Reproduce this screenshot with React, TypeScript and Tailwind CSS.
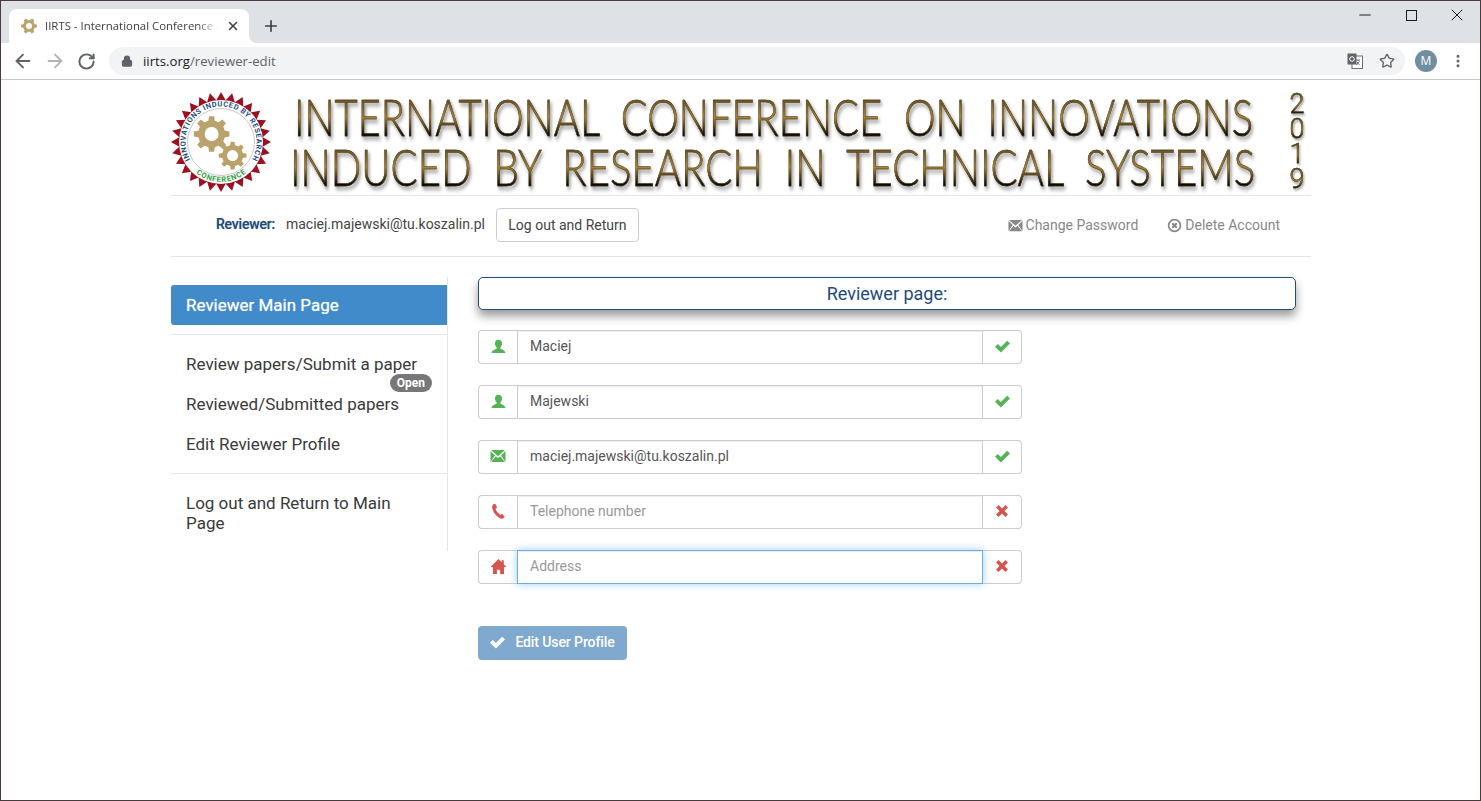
import React from "react";
import { ArrowLeft, ArrowRight, RotateCw, Plus, X, Minus, Lock, Star, MoreVertical } from "lucide-react";

const gearPath = (cx: number, cy: number, outer: number, inner: number, teeth: number) => {
  const pts: string[] = [];
  const step = (Math.PI * 2) / teeth;
  for (let i = 0; i < teeth; i++) {
    const a = i * step;
    const offsets: [number, number][] = [
      [-0.3, inner],
      [-0.18, outer],
      [0.18, outer],
      [0.3, inner],
    ];
    offsets.forEach(([o, r]) => {
      const t = a + o * step;
      pts.push(`${(cx + Math.cos(t) * r).toFixed(2)} ${(cy + Math.sin(t) * r).toFixed(2)}`);
    });
  }
  return "M" + pts.join("L") + "Z";
};

const burstPath = (cx: number, cy: number, outer: number, inner: number, points: number) => {
  const pts: string[] = [];
  for (let i = 0; i < points * 2; i++) {
    const r = i % 2 === 0 ? outer : inner;
    const t = (i * Math.PI) / points;
    pts.push(`${(cx + Math.cos(t) * r).toFixed(2)} ${(cy + Math.sin(t) * r).toFixed(2)}`);
  }
  return "M" + pts.join("L") + "Z";
};

const Gear = ({ cx, cy, r, hole }: { cx: number; cy: number; r: number; hole: number }) => (
  <g>
    <path d={gearPath(cx, cy, r, r * 0.76, 8)} fill="#b9a36b" />
    <circle cx={cx} cy={cy} r={hole} fill="#fff" />
  </g>
);

const Logo = () => (
  <svg width="100" height="100" viewBox="0 0 100 100" className="shrink-0">
    <defs>
      <path id="sealTop" d="M19.300 67.750 A 35.500 35.500 0 1 1 80.700 67.750" />
      <path id="sealBottom" d="M25 81.200 A 40 40 0 0 0 75 81.200" />
    </defs>
    <path d={burstPath(50, 50, 50, 42, 28)} fill="#9c1020" />
    <circle cx="50" cy="50" r="42" fill="#fff" />
    <circle cx="50" cy="50" r="33.500" fill="#fff" stroke="#b9b9b9" strokeWidth="0.8" />
    <text fontFamily="Roboto, sans-serif" fontSize="7.400" fontWeight="700" fill="#27507f">
      <textPath href="#sealTop" textLength="148">
        INNOVATIONS INDUCED BY RESEARCH
      </textPath>
    </text>
    <text fontFamily="Roboto, sans-serif" fontSize="7.500" fontWeight="700" fill="#2f9e44">
      <textPath href="#sealBottom" textLength="54">
        CONFERENCE
      </textPath>
    </text>
    <Gear cx={40.600} cy={42} r={18} hole={7} />
    <Gear cx={61.600} cy={63.600} r={14} hole={5.500} />
  </svg>
);

// glyphicon style icons
const UserGlyph = ({ className }: { className: string }) => (
  <svg viewBox="0 0 16 16" className={className} fill="currentColor">
    <path d="M8 .8c2.300 0 3.800 1.700 3.800 4.100 0 1.700-.8 3.200-1.800 4v1.100c0 .7 5 1.300 5.500 4.800H.5c.5-3.500 5.500-4.100 5.500-4.800V8.900C5 8.100 4.200 6.600 4.200 4.900 4.200 2.500 5.700.8 8 .8Z" />
  </svg>
);

const MailGlyph = ({ className }: { className: string }) => (
  <svg viewBox="0 0 16 16" className={className} fill="currentColor">
    <path d="M1 2h14L8 8.200ZM.5 3 5 7.500.5 14ZM15.500 3v11L11 7.500ZM5.800 8.200 8 10.100l2.200-1.900 4.700 5.800H1.100Z" />
  </svg>
);

const PhoneGlyph = ({ className }: { className: string }) => (
  <svg viewBox="0 0 16 16" className={className} fill="currentColor">
    <path d="M3.100 1.200 5 .8l1.700 3.400-1.500 1.300c.5 2 2.400 4.400 4.500 5.700l1.500-1 2.700 2.700-1.300 1.500c-.7.500-1.700.6-2.800.1C6.200 12.800 2.800 8.600 2.100 4.700 1.900 3.300 2.300 2 3.100 1.200Z" />
  </svg>
);

const HomeGlyph = ({ className }: { className: string }) => (
  <svg viewBox="0 0 16 16" className={className} fill="currentColor">
    <path d="M8 1 .5 8.500h2.300V15h3.700v-4h3v4h3.700V8.500h2.300L13 6V2h-2v2Z" />
  </svg>
);

const OkGlyph = ({ className }: { className: string }) => (
  <svg viewBox="0 0 16 16" className={className} fill="currentColor">
    <path d="M13 1.800 16 4.800 6.300 14.500 0 8.200l3-3 3.300 3.300Z" />
  </svg>
);

const RemoveGlyph = ({ className }: { className: string }) => (
  <svg viewBox="0 0 16 16" className={className} fill="currentColor">
    <path d="M4 1.200 8 5.200l4-4L14.800 4l-4 4 4 4-2.800 2.800-4-4-4 4L1.200 12l4-4-4-4Z" />
  </svg>
);

const RemoveCircle = ({ className }: { className: string }) => (
  <svg viewBox="0 0 16 16" className={className} fill="none" stroke="currentColor">
    <circle cx="8" cy="8" r="6.300" strokeWidth="1.800" />
    <path d="M5.600 5.600l4.800 4.800M10.400 5.600l-4.800 4.800" strokeWidth="2.200" />
  </svg>
);

const TranslateIcon = () => (
  <svg width="16" height="16" viewBox="0 0 16 16" className="shrink-0">
    <rect x="5" y="3" width="10.500" height="12.500" fill="#fff" stroke="#6b6f73" strokeWidth="1" />
    <path d="M9 7h4M11 7v1M9.500 12l3-4M10 9l2.500 3" stroke="#6b6f73" strokeWidth="1" fill="none" />
    <rect x="0.500" y="0.500" width="9" height="11" fill="#5f6368" />
    <circle cx="5" cy="6" r="2.300" fill="none" stroke="#fff" strokeWidth="1" />
  </svg>
);

type FieldProps = {
  icon: React.ReactNode;
  value?: string;
  placeholder?: string;
  ok: boolean;
  focused?: boolean;
};

const Field = ({ icon, value, placeholder, ok, focused }: FieldProps) => (
  <div className="flex h-[34px] w-[544px]">
    <span className={`flex w-[39px] shrink-0 items-center justify-center rounded-l border border-r-0 border-[#ccc] bg-white pb-[2px] ${ok ? "text-[#55b355]" : "text-[#d9534f]"}`}>
      {icon}
    </span>
    <input
      readOnly
      value={value ?? ""}
      placeholder={placeholder}
      className={`min-w-0 flex-1 border px-3 pb-[2px] text-sm text-[#555] outline-none placeholder:text-[#999] ${
        focused
          ? "relative border-[#66afe9] shadow-[inset_0_1px_1px_rgba(0,0,0,0.075),0_0_8px_rgba(102,175,233,0.6)]"
          : "border-[#ccc] shadow-[inset_0_1px_1px_rgba(0,0,0,0.075)]"
      }`}
    />
    <span className={`flex w-[39px] shrink-0 items-center justify-center rounded-r border border-l-0 border-[#ccc] bg-white pb-[2px] ${ok ? "text-[#55b355]" : "text-[#d9534f]"}`}>
      {ok ? <OkGlyph className="h-[15px] w-[15px]" /> : <RemoveGlyph className="h-[14px] w-[14px]" />}
    </span>
  </div>
);

const NavItem = ({ children, wrap }: { children: React.ReactNode; wrap?: boolean }) => (
  <a className={`block py-[10px] pl-[15px] text-[17px] leading-5 text-[#3a3a3a] ${wrap ? "pr-[40px]" : "pr-[15px]"}`}>{children}</a>
);

const App = () => {
  return (
    <div className="flex h-[801px] w-[1481px] flex-col overflow-hidden border border-[#4b3a3c] bg-white font-['Roboto',sans-serif]">
      {/* browser tabs */}
      <div className="flex h-[42px] shrink-0 items-end bg-[#dee1e6] pl-2">
        <div className="relative flex h-[34px] w-[240px] items-center rounded-t-lg bg-white pl-3 pr-[9px] font-['Open_Sans',sans-serif] text-[11.400px] text-[#3c4043]">
          <svg width="16" height="16" viewBox="0 0 16 16" className="mr-2 shrink-0">
            <path d={gearPath(8, 8, 8, 6, 6)} fill="#b9a36b" />
            <circle cx="8" cy="8" r="3" fill="#fff" />
          </svg>
          <span className="flex-1 overflow-hidden whitespace-nowrap [mask-image:linear-gradient(to_right,black_88%,transparent)]">
            IIRTS - International Conference on Innovations
          </span>
          <X size={14} strokeWidth={2.500} className="ml-2 shrink-0 text-[#3c4043]" />
          <span className="absolute -right-2 bottom-0 h-2 w-2 bg-white">
            <span className="block h-2 w-2 rounded-bl-lg bg-[#dee1e6]" />
          </span>
        </div>
        <Plus size={18} strokeWidth={2.200} className="mb-[8px] ml-[13px] text-[#3c4043]" />
        <div className="flex-1" />
        <div className="flex self-start pt-[6px] text-[#1b1b1b]">
          <span className="flex h-4 w-[46px] items-center justify-center">
            <Minus size={18} strokeWidth={1.300} />
          </span>
          <span className="flex h-4 w-[46px] items-center justify-center">
            <span className="h-[11px] w-[11px] border border-[#1b1b1b]" />
          </span>
          <span className="flex h-4 w-[46px] items-center justify-center">
            <X size={20} strokeWidth={1.200} />
          </span>
        </div>
      </div>

      {/* browser toolbar */}
      <div className="flex h-[37px] shrink-0 items-center border-b border-[#c6c8cb] bg-white pl-[11px] pr-[14px]">
        <ArrowLeft size={22} strokeWidth={2} className="text-[#5f6368]" />
        <ArrowRight size={22} strokeWidth={2} className="ml-[10px] text-[#b0b3b7]" />
        <RotateCw size={19} strokeWidth={2.500} className="ml-[11px] text-[#5f6368]" />
        <div className="ml-[13px] flex h-7 flex-1 items-center rounded-full bg-[#f1f3f4] pl-3 pr-[10px]">
          <Lock size={12} strokeWidth={2.500} className="fill-[#5f6368] text-[#5f6368]" />
          <span className="ml-[10px] pt-[1px] font-['Open_Sans',sans-serif] text-[13.200px] text-[#202124]">
            iirts.org<span className="text-[#5f6368]">/reviewer-edit</span>
          </span>
          <div className="flex-1" />
          <TranslateIcon />
          <Star size={16} strokeWidth={2} className="ml-[16px] text-[#5f6368]" />
        </div>
        <span className="ml-[10px] flex h-[22px] w-[22px] items-center justify-center rounded-full bg-[#6f8f9f] font-['Open_Sans',sans-serif] text-xs text-white">
          M
        </span>
        <MoreVertical size={16} strokeWidth={2.500} className="ml-[13px] text-[#5f6368]" />
      </div>

      {/* page */}
      <div className="ml-[170px] w-[1140px] flex-1">
        {/* banner */}
        <div className="flex h-[116px] items-center border-b border-[#e5e5e5] pt-[11px] pb-[2px]">
          <Logo />
          <div className="ml-[19px] flex w-[965px] flex-col font-['Lato',sans-serif] text-[51px] font-light leading-[50px]">
            <span className="ml-[4px] w-fit origin-left scale-x-[0.7825] whitespace-nowrap bg-[linear-gradient(to_bottom,#4a3d1e,#a8843a_50%,#0d0a04_85%)] bg-clip-text text-transparent [-webkit-text-stroke:0.5px_#4a3a18] [word-spacing:14px] drop-shadow-[2px_3px_2px_rgba(0,0,0,0.45)]">
              INTERNATIONAL CONFERENCE ON INNOVATIONS
            </span>
            <span className="w-fit origin-left scale-x-[0.7876] whitespace-nowrap bg-[linear-gradient(to_bottom,#4a3d1e,#a8843a_50%,#0d0a04_85%)] bg-clip-text text-transparent [-webkit-text-stroke:0.5px_#4a3a18] [word-spacing:14px] drop-shadow-[2px_3px_2px_rgba(0,0,0,0.45)]">
              INDUCED BY RESEARCH IN TECHNICAL SYSTEMS
            </span>
          </div>
          <div className="ml-[30px] flex w-[24px] flex-col items-center font-['Roboto',sans-serif] text-[27px] font-light leading-[25px]">
            {["2", "0", "1", "9"].map((d) => (
              <span
                key={d}
                className="bg-[linear-gradient(to_bottom,#4a3d1e,#a8843a_50%,#0d0a04_85%)] bg-clip-text text-transparent [-webkit-text-stroke:0.4px_#4a3a18] drop-shadow-[1px_2px_1px_rgba(0,0,0,0.4)]"
              >
                {d}
              </span>
            ))}
          </div>
        </div>

        {/* user bar */}
        <div className="flex h-[61px] items-center border-b border-[#e5e5e5] pb-[2px] pl-[45px] pr-[31px] text-sm text-[#444]">
          <b className="mb-[3px] font-medium tracking-[-0.2px] text-[#1f4a78] [text-shadow:0_0_1px_rgba(31,74,120,0.5)]">Reviewer:</b>
          <span className="mb-[3px] ml-[11px]">maciej.majewski@tu.koszalin.pl</span>
          <button className="ml-[11px] h-[34px] w-[143px] rounded border border-[#ccc] bg-white text-sm text-[#444]">
            Log out and Return
          </button>
          <div className="flex-1" />
          <a className="flex items-center text-[#888]">
            <MailGlyph className="mr-[3px] h-[15px] w-[15px]" />
            Change Password
          </a>
          <a className="ml-[29px] flex items-center text-[#888]">
            <RemoveCircle className="mr-[3px] h-[15px] w-[15px]" />
            Delete Account
          </a>
        </div>

        <div className="flex pt-5">
          {/* sidebar */}
          <aside className="h-[274px] w-[277px] shrink-0 border-r border-[#e5e5e5] pt-2">
            <a className="block h-10 rounded-l-[3px] bg-[#428bca] px-[15px] py-[10px] text-[17px] leading-5 text-white [text-shadow:0_0_1px_rgba(255,255,255,0.6)]">
              Reviewer Main Page
            </a>
            <hr className="my-[9px] border-[#e5e5e5]" />
            <div className="relative">
              <NavItem>Review papers/Submit a paper</NavItem>
              <span className="absolute right-[15px] top-[30px] rounded-full bg-[#777] px-[7px] py-[1px] text-xs font-bold leading-[16px] text-white">
                Open
              </span>
              <NavItem>Reviewed/Submitted papers</NavItem>
              <NavItem>Edit Reviewer Profile</NavItem>
            </div>
            <hr className="my-[9px] border-[#e5e5e5]" />
            <NavItem wrap>Log out and Return to Main Page</NavItem>
          </aside>

          {/* main content */}
          <main className="ml-[30px] flex-1">
            <h2 className="flex h-[33px] w-[818px] items-center justify-center rounded-[5px] border border-[#1d4f77] bg-white text-lg font-normal text-[#1f4a78] shadow-[0_6px_10px_rgba(0,0,0,0.4)]">
              Reviewer page:
            </h2>
            <div className="mt-5 flex flex-col gap-[21px]">
              <Field icon={<UserGlyph className="h-[15px] w-[15px]" />} value="Maciej" ok />
              <Field icon={<UserGlyph className="h-[15px] w-[15px]" />} value="Majewski" ok />
              <Field icon={<MailGlyph className="h-4 w-4" />} value="maciej.majewski@tu.koszalin.pl" ok />
              <Field icon={<PhoneGlyph className="h-[17px] w-[17px]" />} placeholder="Telephone number" ok={false} />
              <Field icon={<HomeGlyph className="h-[17px] w-[17px]" />} placeholder="Address" ok={false} focused />
            </div>
            <button className="mt-[42px] flex h-[34px] w-[149px] items-center justify-center rounded bg-[#7fa9ce] pb-[2px] text-sm font-medium tracking-[-0.1px] text-white">
              <OkGlyph className="mr-[10px] h-[15px] w-[15px]" />
              Edit User Profile
            </button>
          </main>
        </div>
      </div>
    </div>
  );
};

export default App;
